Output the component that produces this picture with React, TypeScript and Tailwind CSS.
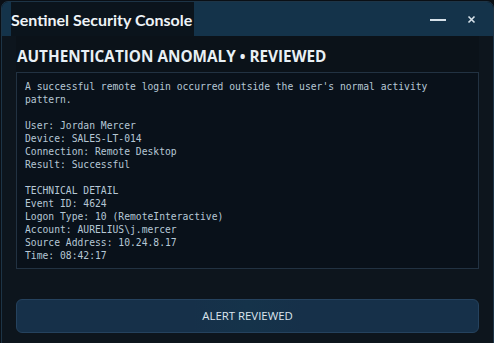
import React from "react";

const lines = [
  "A successful remote login occurred outside the user's normal activity",
  "pattern.",
  "",
  "User: Jordan Mercer",
  "Device: SALES-LT-014",
  "Connection: Remote Desktop",
  "Result: Successful",
  "",
  "TECHNICAL DETAIL",
  "Event ID: 4624",
  "Logon Type: 10 (RemoteInteractive)",
  "Account: AURELIUS\\j.mercer",
  "Source Address: 10.24.8.17",
  "Time: 08:42:17",
];

export default function App() {
  return (
    <div className="w-[494px] h-[343px] bg-[#0a0f15] overflow-hidden" style={{ fontFamily: 'Lato, "Open Sans", sans-serif' }}>
      <div className="w-[493px] h-[343px] ml-px mt-px flex flex-col border border-[#1d3446] rounded-t-[7px] bg-[#0d151d] overflow-hidden">
        <div className="h-[34px] shrink-0 bg-[#14334a] flex items-stretch">
          <div className="ml-[9px] pr-[2px] pt-[2px] bg-[#0b141c] flex items-center text-[16px] font-bold text-[#eef3f7]">
            Sentinel Security Console
          </div>
          <div className="flex-1" />
          <div className="flex items-center gap-[21px] pr-[17px] text-[#e3ebf1]">
            <div className="w-[16px] h-[2px] bg-[#d6e1e9] mt-px" />
            <svg width="9" height="9" viewBox="0 0 9 9" className="mt-px">
              <path d="M1.5 1.5 L7.5 7.5 M7.5 1.5 L1.5 7.5" stroke="#d6e1e9" strokeWidth="1.6" />
            </svg>
          </div>
        </div>
        <div className="flex flex-col px-[14px]">
          <div className="h-[36px] pt-[5px] bg-[#0b1219] flex items-center pl-px text-[15.3px] font-bold text-[#e9f0f5]" style={{ fontFamily: '"Open Sans", sans-serif' }}>
            AUTHENTICATION ANOMALY • REVIEWED
          </div>
          <div
            className="h-[197px] border border-[#223242] bg-[#09111a] pl-[8px] pt-[7px] text-[#b6c8d6] text-[9.7px] leading-[13px] whitespace-pre"
            style={{ fontFamily: '"DejaVu Sans Mono", "Liberation Mono", monospace' }}
          >
            {lines.map((l, i) => (
              <div key={i} className="h-[13px]">{l}</div>
            ))}
          </div>
          <div className="h-[30px]" />
          <button className="h-[34px] rounded-[6px] border border-[#25425e] bg-[linear-gradient(90deg,#163049_0%,#163049_38%,#15334a_50%,#163049_62%,#163049_100%)] text-[11.4px] text-[#dce6ee] flex items-center justify-center" style={{ fontFamily: '"Open Sans", sans-serif' }}>
            ALERT REVIEWED
          </button>
        </div>
      </div>
    </div>
  );
}
